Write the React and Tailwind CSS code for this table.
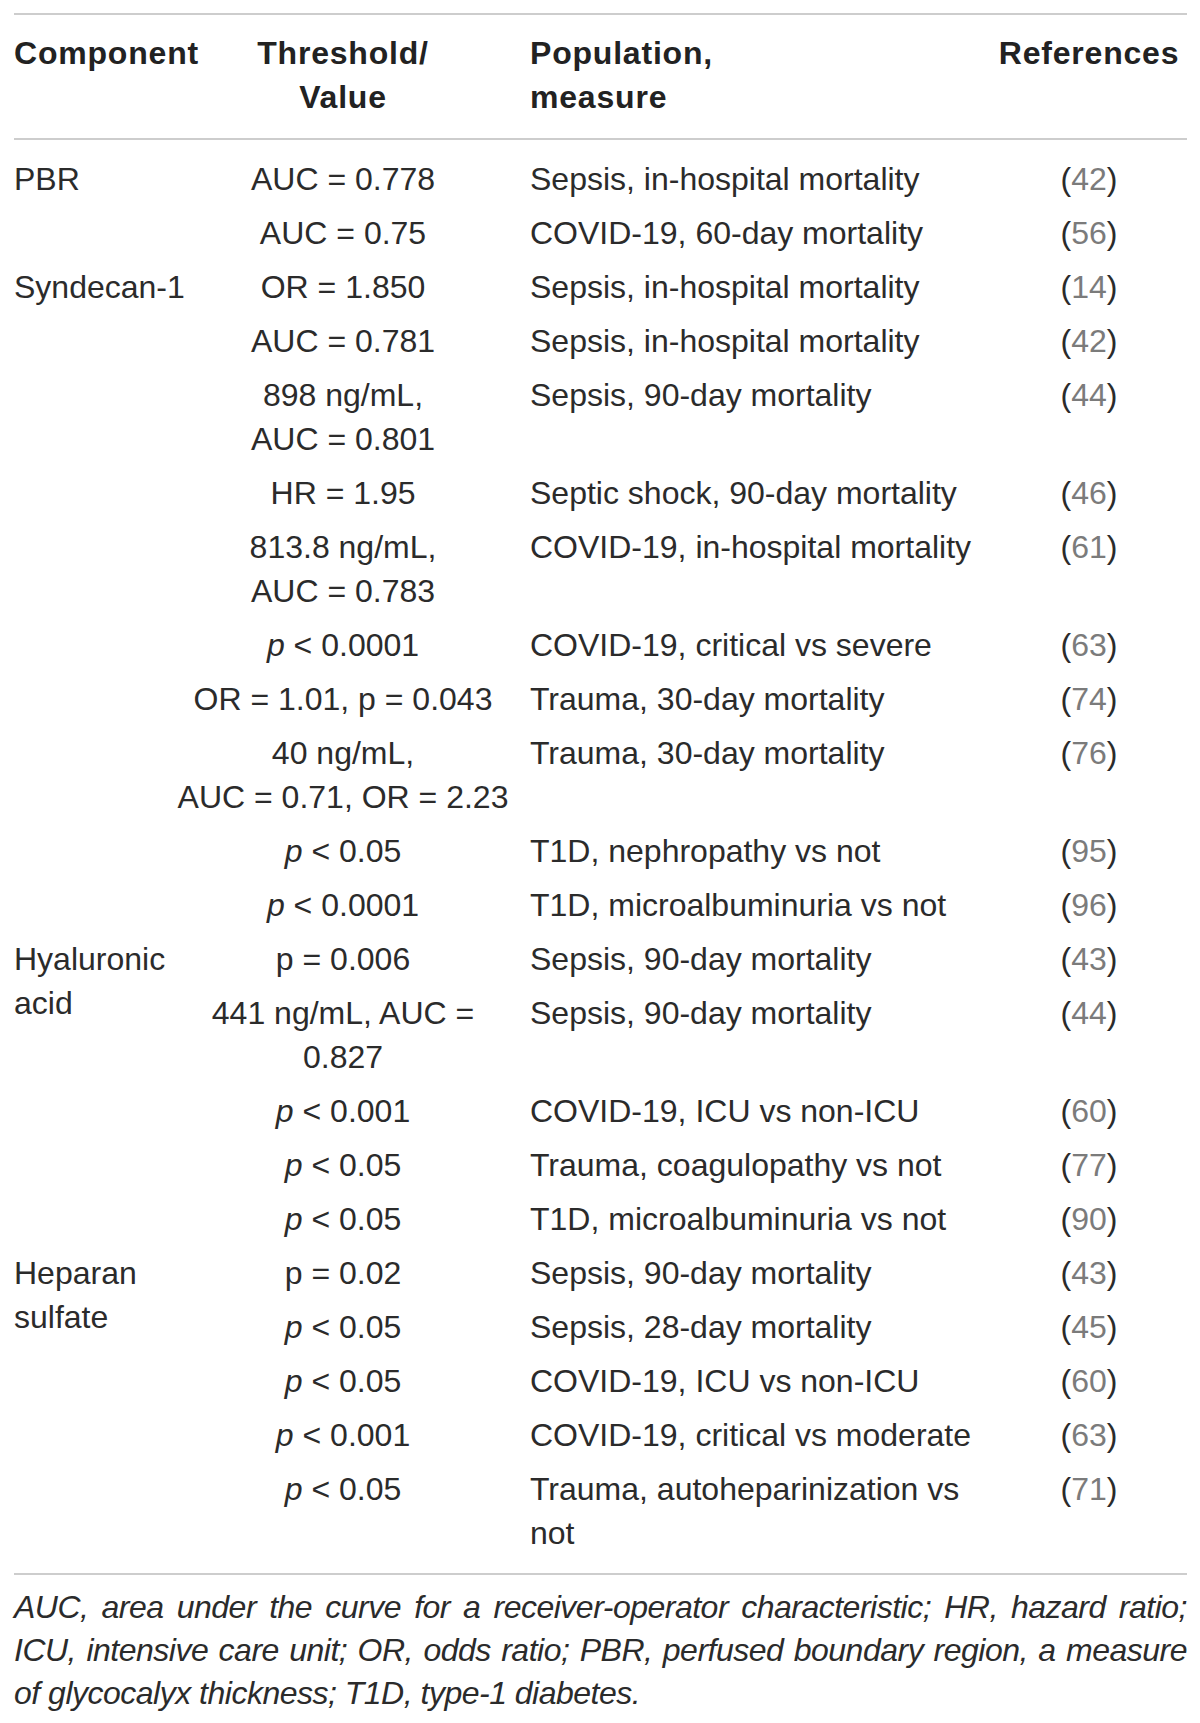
import React from 'react';

const P = () => <span className="italic">p</span>;

const Ref = ({ n }) => (
    <span>
        (<span className="text-[#7b7b7b]">{n}</span>)
    </span>
);

const rows = [
    { comp: 'PBR', span: 2, value: 'AUC = 0.778', pop: 'Sepsis, in-hospital mortality', ref: 42 },
    { value: 'AUC = 0.75', pop: 'COVID-19, 60-day mortality', ref: 56 },
    { comp: 'Syndecan-1', span: 10, value: 'OR = 1.850', pop: 'Sepsis, in-hospital mortality', ref: 14 },
    { value: 'AUC = 0.781', pop: 'Sepsis, in-hospital mortality', ref: 42 },
    { value: <>898 ng/mL,<br />AUC = 0.801</>, pop: 'Sepsis, 90-day mortality', ref: 44 },
    { value: 'HR = 1.95', pop: 'Septic shock, 90-day mortality', ref: 46 },
    { value: <>813.8 ng/mL,<br />AUC = 0.783</>, pop: 'COVID-19, in-hospital mortality', ref: 61 },
    { value: <><P /> &lt; 0.0001</>, pop: 'COVID-19, critical vs severe', ref: 63 },
    { value: 'OR = 1.01, p = 0.043', pop: 'Trauma, 30-day mortality', ref: 74 },
    { value: <>40 ng/mL,<br />AUC = 0.71, OR = 2.23</>, pop: 'Trauma, 30-day mortality', ref: 76 },
    { value: <><P /> &lt; 0.05</>, pop: 'T1D, nephropathy vs not', ref: 95 },
    { value: <><P /> &lt; 0.0001</>, pop: 'T1D, microalbuminuria vs not', ref: 96 },
    { comp: <>Hyaluronic<br />acid</>, span: 5, value: 'p = 0.006', pop: 'Sepsis, 90-day mortality', ref: 43 },
    { value: <>441 ng/mL, AUC =<br />0.827</>, pop: 'Sepsis, 90-day mortality', ref: 44 },
    { value: <><P /> &lt; 0.001</>, pop: 'COVID-19, ICU vs non-ICU', ref: 60 },
    { value: <><P /> &lt; 0.05</>, pop: 'Trauma, coagulopathy vs not', ref: 77 },
    { value: <><P /> &lt; 0.05</>, pop: 'T1D, microalbuminuria vs not', ref: 90 },
    { comp: <>Heparan<br />sulfate</>, span: 5, value: 'p = 0.02', pop: 'Sepsis, 90-day mortality', ref: 43 },
    { value: <><P /> &lt; 0.05</>, pop: 'Sepsis, 28-day mortality', ref: 45 },
    { value: <><P /> &lt; 0.05</>, pop: 'COVID-19, ICU vs non-ICU', ref: 60 },
    { value: <><P /> &lt; 0.001</>, pop: 'COVID-19, critical vs moderate', ref: 63 },
    { value: <><P /> &lt; 0.05</>, pop: 'Trauma, autoheparinization vs not', ref: 71 },
];

const Cols = () => (
    <colgroup>
        <col className="w-[158px]" />
        <col className="w-[342px]" />
        <col className="w-[477px]" />
        <col className="w-[196px]" />
    </colgroup>
);

const App = () => {
    return (
        <div className="w-[1200px] bg-white pl-[14px] pr-[13px] pt-[13px] pb-[8px] font-['Liberation_Sans',Arial,sans-serif] text-[32px] leading-[44px] text-[#2b2b2b]">
            <div className="h-[2px] bg-[#cdcdcd]" />
            <table className="w-full table-fixed mt-[16px] mb-[19px]">
                <Cols />
                <thead>
                    <tr className="font-bold text-[#222] tracking-[0.8px]">
                        <th className="text-left align-top p-0 font-bold whitespace-nowrap">Component</th>
                        <th className="text-center align-top p-0 font-bold">
                            Threshold/
                            <br />
                            Value
                        </th>
                        <th className="text-left align-top p-0 pl-[16px] font-bold">
                            Population,
                            <br />
                            measure
                        </th>
                        <th className="text-center align-top p-0 font-bold">References</th>
                    </tr>
                </thead>
            </table>
            <div className="h-[2px] bg-[#cdcdcd]" />
            <table className="w-full table-fixed mt-[12px] mb-[13px]">
                <Cols />
                <tbody>
                    {rows.map((r, i) => (
                        <tr key={i}>
                            {r.comp && (
                                <td rowSpan={r.span} className="align-top py-[5px] px-0 whitespace-nowrap">
                                    {r.comp}
                                </td>
                            )}
                            <td className="align-top py-[5px] px-0 text-center whitespace-nowrap">{r.value}</td>
                            <td className="align-top py-[5px] pl-[16px] pr-[8px]">{r.pop}</td>
                            <td className="align-top py-[5px] px-0 text-center">
                                <Ref n={r.ref} />
                            </td>
                        </tr>
                    ))}
                </tbody>
            </table>
            <div className="h-[2px] bg-[#cdcdcd]" />
            <p className="mt-[11px] italic text-justify leading-[43px] tracking-[-0.5px] text-[#2b2b2b]">
                AUC, area under the curve for a receiver-operator characteristic; HR, hazard ratio; ICU, intensive care unit; OR, odds ratio; PBR, perfused boundary region, a measure of glycocalyx thickness; T1D, type-1 diabetes.
            </p>
        </div>
    );
};

export default App;
